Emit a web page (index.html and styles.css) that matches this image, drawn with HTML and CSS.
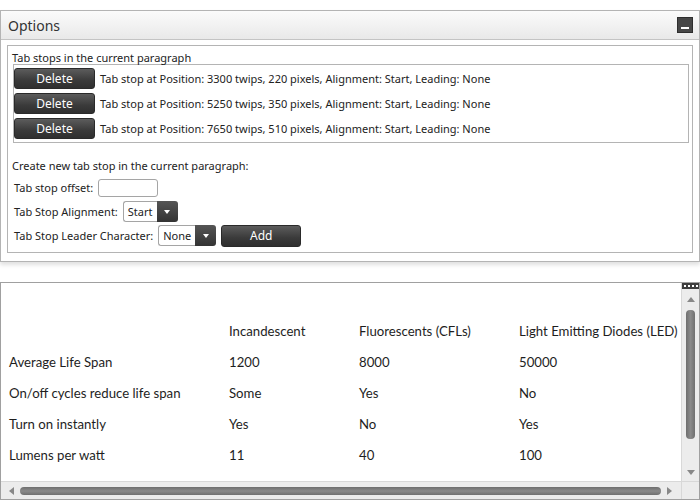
FILE: index.html
```html
<!DOCTYPE html>
<html>
<head>
<meta charset="utf-8">
<link rel="stylesheet" href="styles.css">
</head>
<body>
<div class="panel">
  <div class="panel-head">
    <span class="panel-title">Options</span>
    <span class="min-btn"><span class="min-bar"></span></span>
  </div>
  <div class="panel-body">
    <div class="group">
      <div class="caption">Tab stops in the current paragraph</div>
      <div class="list">
        <div class="row"><button class="btn del">Delete</button><span class="row-text">Tab stop at Position: 3300 twips, 220 pixels, Alignment: Start, Leading: None</span></div>
        <div class="row"><button class="btn del">Delete</button><span class="row-text">Tab stop at Position: 5250 twips, 350 pixels, Alignment: Start, Leading: None</span></div>
        <div class="row"><button class="btn del">Delete</button><span class="row-text">Tab stop at Position: 7650 twips, 510 pixels, Alignment: Start, Leading: None</span></div>
      </div>
      <div class="create">Create new tab stop in the current paragraph:</div>
      <div class="field"><span class="lbl">Tab stop offset:</span><span class="input"></span></div>
      <div class="field"><span class="lbl">Tab Stop Alignment:</span><span class="select"><span class="sel-val">Start</span><span class="sel-btn"><span class="tri"></span></span></span></div>
      <div class="field"><span class="lbl">Tab Stop Leader Character:</span><span class="select"><span class="sel-val">None</span><span class="sel-btn"><span class="tri"></span></span></span><button class="btn add">Add</button></div>
    </div>
  </div>
</div>

<div class="doc">
  <div class="doc-content">
    <div class="table">
      <div class="c"></div><div class="c">Incandescent</div><div class="c">Fluorescents (CFLs)</div><div class="c">Light Emitting Diodes (LED)</div>
      <div class="c">Average Life Span</div><div class="c">1200</div><div class="c">8000</div><div class="c">50000</div>
      <div class="c">On/off cycles reduce life span</div><div class="c">Some</div><div class="c">Yes</div><div class="c">No</div>
      <div class="c">Turn on instantly</div><div class="c">Yes</div><div class="c">No</div><div class="c">Yes</div>
      <div class="c">Lumens per watt</div><div class="c">11</div><div class="c">40</div><div class="c">100</div>
    </div>
  </div>
  <div class="vscroll">
    <div class="grip"><span></span><span></span><span></span><span></span></div>
    <div class="arr up"></div>
    <div class="vthumb"></div>
    <div class="arr down"></div>
  </div>
  <div class="hscroll">
    <div class="arr left"></div>
    <div class="hthumb"></div>
    <div class="arr right"></div>
  </div>
  <div class="corner"></div>
</div>
</body>
</html>
```
FILE: styles.css
```css
html, body {
  margin: 0;
  padding: 0;
  background: #fff;
}
body {
  width: 700px;
  height: 500px;
  overflow: hidden;
  font-family: "Noto Sans", "Open Sans", sans-serif;
  color: #222;
}
.panel {
  margin-top: 10px;
  width: 698px;
  border: 1px solid #b4b4b4;
  background: #f7f7f7;
  box-shadow: 0 3px 4px rgba(0,0,0,0.12);
}
.panel-head {
  height: 28px;
  display: flex;
  align-items: center;
  justify-content: space-between;
  padding: 0 6px 0 7px;
  background: linear-gradient(#fbfbfb, #e9e9e9);
  border-bottom: 1px solid #c4c4c4;
}
.panel-title {
  font-size: 14px;
  color: #333;
}
.min-btn {
  box-sizing: border-box;
  width: 16px;
  height: 16px;
  background: #474747;
  border: 1px solid #2e2e2e;
  display: flex;
  align-items: flex-end;
  justify-content: center;
  padding-bottom: 3px;
}
.min-bar {
  width: 8px;
  height: 2px;
  background: #fff;
}
.panel-body {
  padding: 5px 6px 8px 6px;
  background: #fff;
}
.group {
  border: 1px solid #b4b4b4;
  padding: 3px 3px 6px 4px;
  font-size: 11px;
}
.caption {
  height: 15px;
  line-height: 18px;
}
.list {
  margin-left: 1px;
  border: 1px solid #b4b4b4;
  padding: 3px 0;
  display: flex;
  flex-direction: column;
  gap: 4px;
}
.row {
  display: flex;
  align-items: center;
  height: 21px;
}
.btn {
  font-family: inherit;
  font-size: 12px;
  color: #fff;
  border: 1px solid #2a2a2a;
  border-radius: 3px;
  background: linear-gradient(#5c5c5c, #3a3a3a 60%, #2f2f2f);
  height: 21px;
  padding: 0;
  margin: 0;
}
.del {
  width: 81px;
}
.row-text {
  margin-left: 5px;
}
.create {
  margin-top: 12px;
  height: 22px;
  line-height: 22px;
}
.field {
  display: flex;
  align-items: center;
  height: 21px;
  margin-bottom: 3px;
  padding-left: 2px;
}
.field:last-child {
  margin-bottom: 0;
}
.lbl {
  margin-right: 5px;
}
.input {
  width: 58px;
  height: 16px;
  border: 1px solid #a5a5a5;
  border-radius: 3px;
  background: #fff;
}
.select {
  display: flex;
  height: 21px;
}
.sel-val {
  border: 1px solid #a5a5a5;
  border-right: 0;
  border-radius: 3px 0 0 3px;
  padding: 0 4px;
  line-height: 19px;
  font-size: 11px;
}
.sel-btn {
  width: 21px;
  background: linear-gradient(#555, #333);
  border-radius: 0 3px 3px 0;
  display: flex;
  align-items: center;
  justify-content: center;
}
.tri {
  width: 0;
  height: 0;
  border-left: 3.5px solid transparent;
  border-right: 3.5px solid transparent;
  border-top: 4px solid #fff;
}
.add {
  width: 80px;
  height: 22px;
  margin-left: 5px;
}

.doc {
  margin-top: 20px;
  width: 698px;
  height: 216px;
  border: 1px solid #a0a0a0;
  display: grid;
  grid-template-columns: 1fr 18px;
  grid-template-rows: 1fr 18px;
}
.doc-content {
  overflow: hidden;
  font-family: "Lato", "Open Sans", sans-serif;
  font-size: 13.2px;
  color: #1e1e1e;
}
.table {
  display: grid;
  grid-template-columns: 220px 130px 160px 200px;
  grid-auto-rows: 31px;
  align-items: center;
  padding: 32px 0 0 8px;
  white-space: nowrap;
}
.vscroll {
  background: #ececec;
  border-left: 1px solid #d8d8d8;
  display: flex;
  flex-direction: column;
  align-items: center;
}
.grip {
  width: 100%;
  height: 6px;
  background: #3e3e3e;
  display: flex;
  justify-content: center;
  align-items: center;
  gap: 2px;
}
.grip span {
  width: 2px;
  height: 2px;
  background: #fff;
}
.arr {
  width: 0;
  height: 0;
}
.up {
  margin-top: 8px;
  border-left: 4px solid transparent;
  border-right: 4px solid transparent;
  border-bottom: 5px solid #888;
}
.down {
  margin-top: auto;
  margin-bottom: 6px;
  border-left: 4px solid transparent;
  border-right: 4px solid transparent;
  border-top: 5px solid #888;
}
.vthumb {
  margin-top: 8px;
  width: 9px;
  height: 129px;
  border-radius: 4px;
  background: linear-gradient(90deg, #6e6e6e, #8a8a8a 50%, #707070);
}
.hscroll {
  background: #ececec;
  border-top: 1px solid #d8d8d8;
  display: flex;
  align-items: center;
}
.left {
  margin-left: 8px;
  border-top: 4px solid transparent;
  border-bottom: 4px solid transparent;
  border-right: 5px solid #888;
}
.hthumb {
  margin-left: 6px;
  width: 641px;
  height: 8px;
  border-radius: 4px;
  background: linear-gradient(#6e6e6e, #8a8a8a 50%, #707070);
}
.right {
  margin-left: 6px;
  border-top: 4px solid transparent;
  border-bottom: 4px solid transparent;
  border-left: 5px solid #888;
}
.corner {
  background: #ececec;
  border-left: 1px solid #d8d8d8;
  border-top: 1px solid #d8d8d8;
}
```
